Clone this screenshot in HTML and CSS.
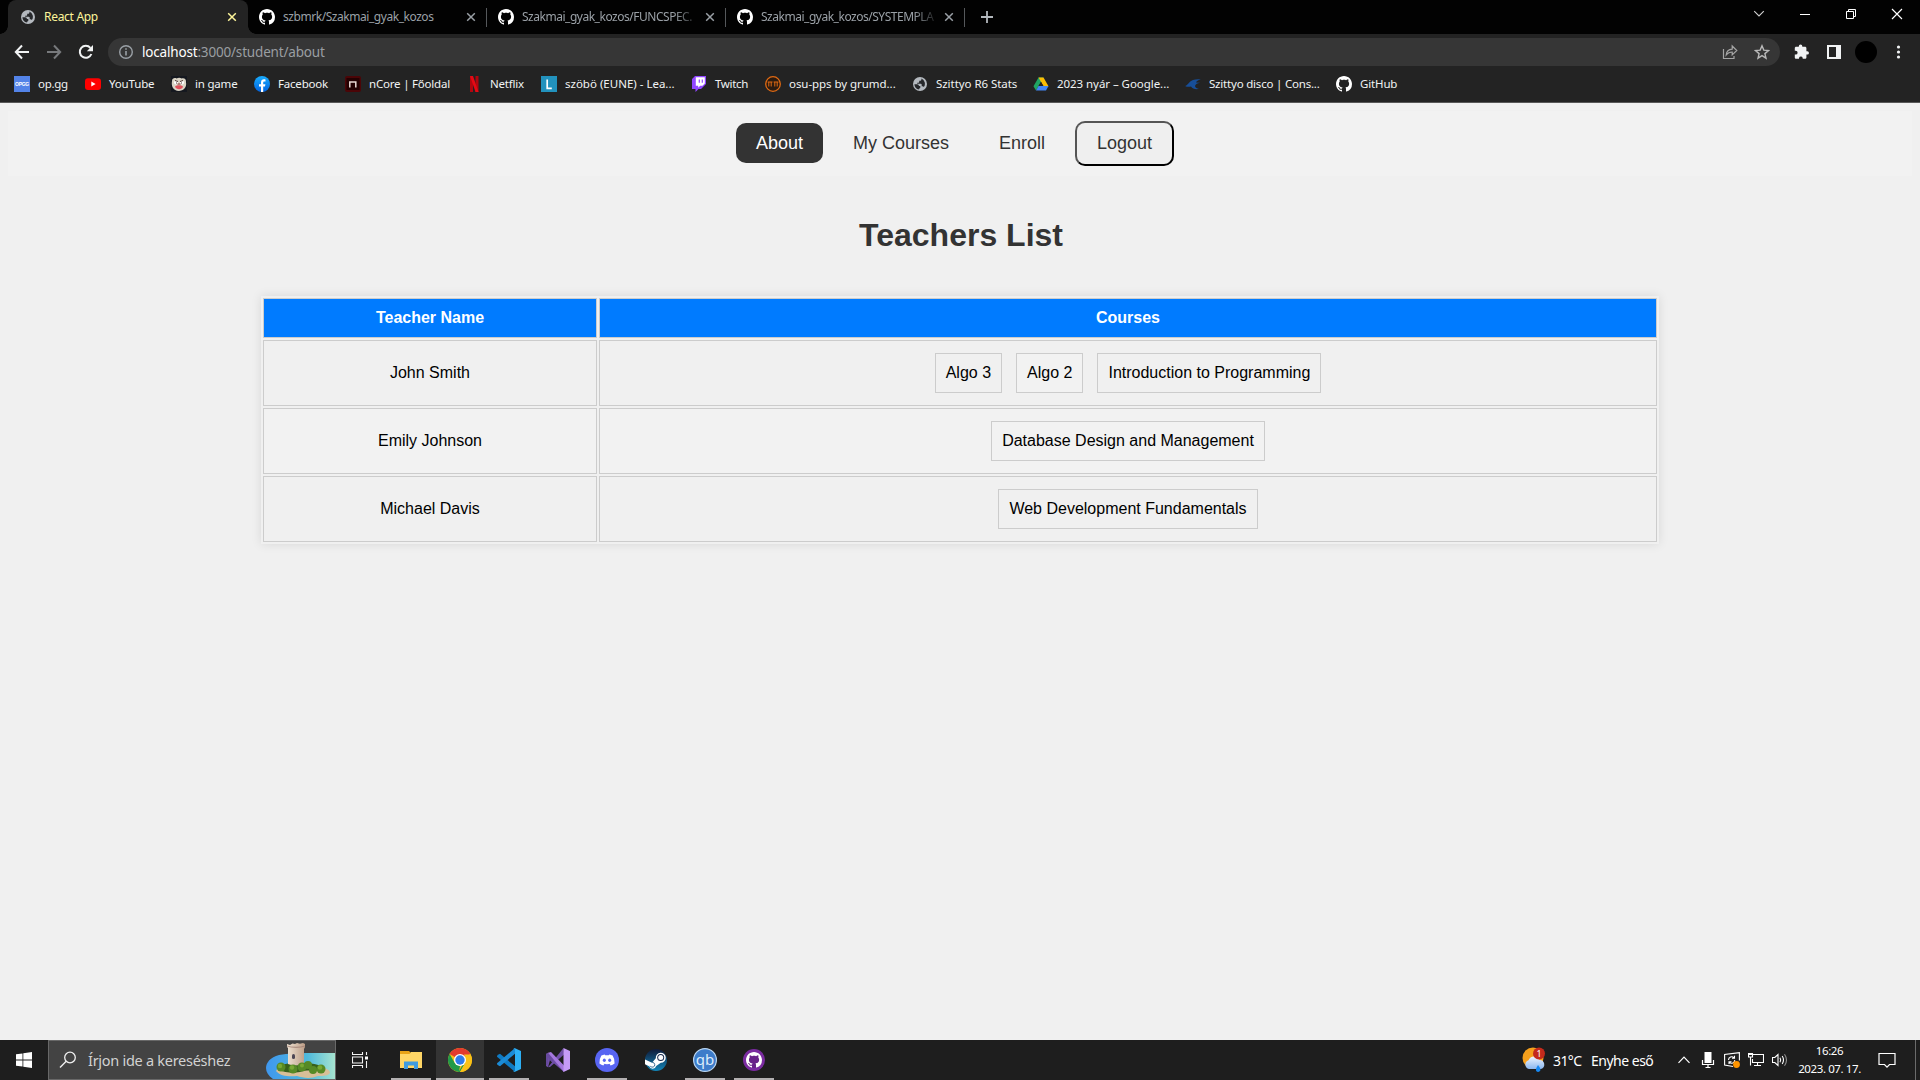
FILE: index.html
```html
<!DOCTYPE html>
<html lang="hu">
<head>
<meta charset="utf-8">
<title>React App</title>
<link rel="stylesheet" href="styles.css">
</head>
<body>
<svg class="defs" aria-hidden="true">
  <defs>
    <symbol id="github" viewBox="0 0 16 16"><path d="M8 0C3.58 0 0 3.58 0 8c0 3.54 2.29 6.53 5.47 7.59.4.07.55-.17.55-.38 0-.19-.01-.82-.01-1.49-2.01.37-2.53-.49-2.69-.94-.09-.23-.48-.94-.82-1.13-.28-.15-.68-.52-.01-.53.63-.01 1.08.58 1.23.82.72 1.21 1.87.87 2.33.66.07-.52.28-.87.51-1.07-1.78-.2-3.64-.89-3.64-3.95 0-.87.31-1.59.82-2.15-.08-.2-.36-1.02.08-2.12 0 0 .67-.21 2.2.82.64-.18 1.32-.27 2-.27s1.36.09 2 .27c1.53-1.04 2.2-.82 2.2-.82.44 1.1.16 1.92.08 2.12.51.56.82 1.27.82 2.15 0 3.07-1.87 3.75-3.65 3.95.29.25.54.73.54 1.48 0 1.07-.01 1.93-.01 2.2 0 .21.15.46.55.38A8.01 8.01 0 0 0 16 8c0-4.42-3.58-8-8-8z"/></symbol>
    <symbol id="globe" viewBox="0 0 16 16"><circle cx="8" cy="8" r="7" fill="#b4b9bf"/><path d="M2.4 8.2h2.800c1.2.1 1.700.8 1.700 1.800h1.400v1.600c0 .6-.5 1-1.200 1v.9A5.600 5.600 0 0 1 2.4 8.200zM9.400 2.600v.9c0 .8-.6 1.300-1.400 1.300h-.8v1.300c0 .4-.3.7-.7.7H5.200v1h3.600c.6 0 .9.400.9.9v1.600h.8c.6 0 1.100.3 1.300.8A5.600 5.600 0 0 0 9.400 2.600z" fill="#26282b"/></symbol>
    <symbol id="x" viewBox="0 0 10 10"><path d="M1.200 1.200l7.600 7.600M8.800 1.200L1.200 8.800" stroke="currentColor" stroke-width="1.500" fill="none"/></symbol>
    <linearGradient id="sky" x1="0" x2="1"><stop offset="0" stop-color="#3f97ee"/><stop offset=".6" stop-color="#4eb9dc"/><stop offset="1" stop-color="#a6e4d0"/></linearGradient>
    <linearGradient id="stone" x1="0" x2="1"><stop offset="0" stop-color="#eee2d2"/><stop offset="1" stop-color="#bd9e87"/></linearGradient>
    <linearGradient id="steamg" x1="0" y1="0" x2="0" y2="1"><stop offset="0" stop-color="#101a38"/><stop offset="1" stop-color="#1285b8"/></linearGradient>
    <linearGradient id="fbg" x1="0" y1="0" x2="0" y2="1"><stop offset="0" stop-color="#18acfe"/><stop offset="1" stop-color="#0163e0"/></linearGradient>
    <linearGradient id="cloudg" x1="0" y1="0" x2="0" y2="1"><stop offset="0" stop-color="#eef5ff"/><stop offset="1" stop-color="#8bb7ef"/></linearGradient>
  </defs>
</svg>

<header class="browser">
  <div class="tabstrip">
    <div class="tab active">
      <svg class="fav"><use href="#globe"/></svg><span class="tab-title">React App</span><svg class="close"><use href="#x"/></svg>
    </div>
    <div class="tab">
      <svg class="fav"><use href="#github"/></svg><span class="tab-title">szbmrk/Szakmai_gyak_kozos</span><svg class="close"><use href="#x"/></svg>
    </div>
    <div class="tab">
      <svg class="fav"><use href="#github"/></svg><span class="tab-title fade">Szakmai_gyak_kozos/FUNCSPEC.</span><svg class="close"><use href="#x"/></svg>
    </div>
    <div class="tab">
      <svg class="fav"><use href="#github"/></svg><span class="tab-title fade">Szakmai_gyak_kozos/SYSTEMPLA</span><svg class="close"><use href="#x"/></svg>
    </div>
    <svg class="newtab" viewBox="0 0 12 12"><path d="M6 0v12M0 6h12" stroke="#b3b8bd" stroke-width="1.800"/></svg>
    <div class="winctl">
      <svg viewBox="0 0 12 12"><path d="M1.200 3.200L6 8l4.800-4.800" fill="none" stroke="#d0d0d0" stroke-width="1.100"/></svg>
      <svg viewBox="0 0 12 12"><path d="M1 6.500h10" stroke="#fff"/></svg>
      <svg viewBox="0 0 12 12"><path d="M1.500 3.500h7v7h-7zM3.500 3.500v-2h7v7h-2" fill="none" stroke="#fff"/></svg>
      <svg viewBox="0 0 12 12"><path d="M1 1l10 10M11 1L1 11" stroke="#fff" stroke-width="1.150"/></svg>
    </div>
  </div>

  <div class="toolbar">
    <div class="navbtns">
      <svg viewBox="0 0 16 16"><path d="M15 8H2M8 1.500L1.800 8 8 14.500" fill="none" stroke="#f1f3f4" stroke-width="2"/></svg>
      <svg viewBox="0 0 16 16"><path d="M1 8h13M8 1.500L14.200 8 8 14.500" fill="none" stroke="#77797c" stroke-width="2"/></svg>
      <svg viewBox="0 0 16 16"><path d="M13.400 10a6 6 0 1 1-1-6.100" fill="none" stroke="#f1f3f4" stroke-width="2"/><path d="M15 1v6.200H8.800z" fill="#f1f3f4"/></svg>
    </div>
    <div class="omnibox">
      <svg class="info" viewBox="0 0 16 16"><circle cx="8" cy="8" r="6.300" fill="none" stroke="#9aa0a6" stroke-width="1.400"/><path d="M8 7v4.500M8 4.200v1.600" stroke="#9aa0a6" stroke-width="1.600"/></svg>
      <span class="url"><b>localhost</b>:3000/student/about</span>
      <svg class="share" viewBox="0 0 16 16"><path d="M1.500 5v9.500h10.500V12" fill="none" stroke="#a5a5a5" stroke-width="1.200"/><path d="M4.200 11c.3-3.800 2.600-5.800 6-5.900V2l4.600 4.500-4.600 4.400V8c-2.600 0-4.500.9-6 3z" fill="none" stroke="#a5a5a5" stroke-width="1.200"/></svg>
      <svg class="star" viewBox="0 0 16 16"><path d="M8 1.800l1.800 4.300 4.700.4-3.600 3.100 1.100 4.600L8 11.700l-4 2.500 1.100-4.600L1.500 6.500l4.700-.4z" fill="none" stroke="#b9b9b9" stroke-width="1.400"/></svg>
    </div>
    <div class="tools">
      <svg viewBox="0 0 16 16"><path d="M13.300 7.300h-.9V4.200c0-.8-.6-1.400-1.400-1.400H8.300v-.5a1.700 1.700 0 0 0-3.500 0v.5H2.200C1.400 2.800.8 3.400.8 4.200v2.600h.9a1.900 1.900 0 0 1 0 3.800H.8v2.800c0 .8.600 1.400 1.400 1.400H5v-.9a1.900 1.900 0 0 1 3.700 0v.9H11c.8 0 1.400-.6 1.400-1.400v-2.800h.9a1.650 1.650 0 0 0 0-3.300z" fill="#f1f3f4"/></svg>
      <svg viewBox="0 0 16 16"><path fill-rule="evenodd" d="M1 1h14v14H1zM3 3v10h7V3z" fill="#f1f3f4"/></svg>
      <span class="avatar"></span>
      <svg viewBox="0 0 16 16"><g fill="#f1f3f4"><circle cx="8.500" cy="3" r="1.600"/><circle cx="8.500" cy="8" r="1.600"/><circle cx="8.500" cy="13" r="1.600"/></g></svg>
    </div>
  </div>

  <nav class="bookmarks">
    <a class="bm"><svg viewBox="0 0 16 16"><path d="M0 0h16v16H0z" fill="#5383e8"/><text x="8" y="10" text-anchor="middle" class="opgg">OPGG</text></svg><span>op.gg</span></a>
    <a class="bm"><svg viewBox="0 0 16 16"><rect y="2.300" width="16" height="11.600" rx="3" fill="#f00"/><path d="M6.300 5.600v5l4.300-2.500z" fill="#fff"/></svg><span>YouTube</span></a>
    <a class="bm"><svg viewBox="0 0 16 16"><path d="M0 0h16v16H0z" fill="#15181f"/><path d="M1 5C1 2 4 1.500 5.500 2.500c2-1.300 4-1 5 0C13 1.500 15.500 3 15 6.500c.8 3-1 8-7 8.500C2 14.500 0 10 1 5z" fill="#d9d3c4"/><circle cx="5" cy="6.500" r="2" fill="#fff"/><circle cx="11" cy="6.500" r="2" fill="#fff"/><path d="M4 4.500l3 1M9 5.500l3-1M5 7h1M10 7h1" stroke="#4b342e"/><path d="M4 10.500c2-1.600 6-1.600 8 0-.6 3.500-7 3.500-8 0z" fill="#e0515c"/><path d="M6.500 8h3" stroke="#82352e"/></svg><span>in game</span></a>
    <a class="bm"><svg viewBox="0 0 16 16"><circle cx="8" cy="8" r="8" fill="url(#fbg)"/><path d="M7 16v-5.500H5V8.200h2V6.500c0-2.100 1.200-3.200 3-3.200.7 0 1.300.1 1.500.2v2h-1c-1 0-1.300.5-1.300 1.200v1.500h2.200l-.4 2.300H9.200V16z" fill="#fff"/></svg><span>Facebook</span></a>
    <a class="bm"><svg viewBox="0 0 16 16"><rect width="16" height="16" rx="2" fill="#4b0507"/><path d="M1.500 2h13v12h-13z" fill="#230102"/><path d="M4.800 11.500V6h6v5.500" fill="none" stroke="#e9d8d4" stroke-width="1.500"/></svg><span>nCore | Főoldal</span></a>
    <a class="bm"><svg viewBox="0 0 16 16"><path d="M4 0h3v16l-3 .1zM9.500 0h3v16h-3z" fill="#b1060f"/><path d="M4 0h3l5.500 16H9.500z" fill="#e50914"/></svg><span>Netflix</span></a>
    <a class="bm"><svg viewBox="0 0 16 16"><path d="M0 0h16v16H0z" fill="#2292bd"/><path d="M6.200 3.500v8.800h4.600" fill="none" stroke="#fff" stroke-width="1.700"/></svg><span>szöbö (EUNE) - Lea...</span></a>
    <a class="bm"><svg viewBox="0 0 16 16"><path d="M4 0L1 3v10h3.500v3l3-3H10l5-5V0z" fill="#9146ff"/><path d="M4.800 1.200h9v6.300l-2.300 2.300H9.200l-2 2v-2H4.800z" fill="#fff"/><path d="M8.300 3.500v3.200M11.300 3.500v3.200" stroke="#9146ff" stroke-width="1.200"/></svg><span>Twitch</span></a>
    <a class="bm"><svg viewBox="0 0 16 16"><circle cx="8" cy="8" r="7.300" fill="#2b1b10" stroke="#e06a13" stroke-width="1.300"/><path d="M2.600 6h4.900M3.800 6v4.500M6.200 6v4.500M8.600 6h4.900M9.800 6v4.500M12.200 6v4.500" stroke="#e06a13" stroke-width="1"/></svg><span>osu-pps by grumd...</span></a>
    <a class="bm"><svg><use href="#globe"/></svg><span>Szittyo R6 Stats</span></a>
    <a class="bm"><svg viewBox="0 0 16 16"><path d="M5.500 1.500h5L5.800 9.600 3 14.500.5 10.200z" fill="#1fa463"/><path d="M5.500 1.500h5l5 8.700h-5z" fill="#fbbc04"/><path d="M5.500 10h10L13 14.500H3z" fill="#4285f4"/><path d="M8 5.800l2.400 4.200H5.600z" fill="#232323"/></svg><span>2023 nyár – Google...</span></a>
    <a class="bm"><svg viewBox="0 0 16 16"><path d="M0 10c3-.5 3.500-4.500 8-6 2.500-1 5-1 7.800-.7C13 4.200 11.500 5 11 6.500l4 .3c-2.500.5-4.500 1.300-5 3.200.4 1.800 2 2.500 4 3-4 .5-6.500-.3-8-2.500-2 .5-4 .5-6-.5z" fill="#174e98"/></svg><span>Szittyo disco | Cons...</span></a>
    <a class="bm"><svg class="white"><use href="#github"/></svg><span>GitHub</span></a>
  </nav>
</header>

<main class="page">
  <nav class="menu">
    <a class="menu-item current">About</a>
    <a class="menu-item">My Courses</a>
    <a class="menu-item">Enroll</a>
    <button class="menu-item logout">Logout</button>
  </nav>
  <h1>Teachers List</h1>
  <table class="teachers">
    <thead><tr><th class="name-col">Teacher Name</th><th>Courses</th></tr></thead>
    <tbody>
      <tr><td>John Smith</td><td><div class="chips"><span>Algo 3</span><span>Algo 2</span><span>Introduction to Programming</span></div></td></tr>
      <tr><td>Emily Johnson</td><td><div class="chips"><span>Database Design and Management</span></div></td></tr>
      <tr><td>Michael Davis</td><td><div class="chips"><span>Web Development Fundamentals</span></div></td></tr>
    </tbody>
  </table>
</main>

<footer class="taskbar">
  <div class="start"><svg viewBox="0 0 16 16"><path d="M0 2.300L6.500 1.400v6.200H0zM7.300 1.300L16 0v7.600H7.300zM0 8.400h6.500v6.200L0 13.700zM7.300 8.400H16V16l-8.700-1.300z" fill="#fff"/></svg></div>
  <div class="search">
    <svg class="lens" viewBox="0 0 18 18"><circle cx="11" cy="6.500" r="5.300" fill="none" stroke="#f0f0f0" stroke-width="1.300"/><path d="M7.200 10.300L1 16.500" stroke="#f0f0f0" stroke-width="1.400"/></svg>
    <span class="hint">Írjon ide a kereséshez</span>
    <svg class="island" viewBox="0 0 70 38"><path d="M70 12v26H8C-3 31-1 18 14 14c9-2 20-1 26-2z" fill="url(#sky)"/><path d="M11 30c2-4 12-6 26-6 14 1 26 2 28 7 0 4-7 4-12 4-7 3-15 2-21 0-8 1-17 0-21-5z" fill="#d8bf98"/><path d="M12 27c5-5 17-6 26-5 12 0 19 2 22 7-9 2-17-1-25 2-9 1-18 1-23-4z" fill="#37601c"/><g fill="#568a25"><circle cx="16" cy="26" r="4.500"/><circle cx="48" cy="29" r="4"/><circle cx="56" cy="28" r="4.500"/></g><path d="M23 7l-1-1V3l3 1 2.500-1.500L30 3l2-1 3 .8L38 2l2 1v3l-1 2v14c-3 3-12 3-16 1z" fill="url(#stone)"/><path d="M22 5c5 1.800 13 1.800 18 0" fill="none" stroke="#9b7b71" stroke-width="1.300" opacity=".7"/><rect x="27" y="13" width="3" height="5" rx="1.500" fill="#4d4654"/><g fill="#568a25"><circle cx="28" cy="28" r="4.500"/><circle cx="37" cy="26" r="4.500"/><circle cx="43" cy="24" r="4"/></g><g fill="#78a934"><circle cx="15" cy="25" r="2.200"/><circle cx="27" cy="26.500" r="2.200"/><circle cx="37" cy="24.500" r="2"/><circle cx="55" cy="26.500" r="2.300"/></g></svg>
  </div>
  <div class="taskview"><svg viewBox="0 0 16 16"><path d="M.5 0v2.500h10V0M.5 16v-2.500h10V16M.5 5h10v6H.5zM14.500 0v3M14.500 9v7" fill="none" stroke="#f2f2f2" stroke-width="1.100"/><path d="M13 4.500h3v3h-3z" fill="#fff"/></svg></div>
  <div class="apps">
    <div class="app open"><svg viewBox="0 0 24 24"><path d="M1 4V3h9l1.500 1.500V8H1z" fill="#e8a317"/><path d="M1 6h9.500L12 4h11v16H1z" fill="#ffd666"/><path d="M5 21v-7.500h14V21h-4v-3.500H9V21z" fill="#3f9be0"/></svg></div>
    <div class="app open focus"><svg viewBox="0 0 24 24"><circle cx="12" cy="12" r="12" fill="#fbc116"/><path d="M12 12L1.600 6A12 12 0 0 1 22.400 6z" fill="#e33b2e"/><path d="M1.600 6l5.200 9L12 18l-1 6A12 12 0 0 1 1.600 6z" fill="#229a48"/><path d="M12 12l5.200 3L12 24h-1.500l4-7z" fill="#229a48"/><path d="M12 24l5.200-9A6 6 0 0 0 17 8.500L16 6.600h6.700A12 12 0 0 1 12 24z" fill="#fbc116"/><circle cx="12" cy="12" r="6" fill="#fff"/><circle cx="12" cy="12" r="4.700" fill="#307ce9"/></svg></div>
    <div class="app open"><svg viewBox="0 0 24 24"><path d="M1.500 6.500L3 5.800l15 12.400V24L.3 9q-.7-.8 0-1.500z" fill="#0f7bc4"/><path d="M1.500 17.500l1.500.7L18 5.800V0L.3 15q-.7.8 0 1.500z" fill="#1b8bd6"/><path d="M17.500 0L24 3v18l-6.500 3c-.7.200-1-.2-1-.7 1 .3 1.500-.1 1.500-.8V1.500c0-.7-.7-1.200-1.500-.8 0-.5.400-.8 1-.7z" fill="#2db0f5"/></svg></div>
    <div class="app"><svg viewBox="0 0 24 24"><path d="M0 6l2-1.300 16 13V24L4 12l-2 2.500v-5L4 12l-2 7.300L0 18z" fill="#704fa8"/><path d="M0 6l2-1.200L9 11l-3.500 3L2 9.500v6L0 18z" fill="#684a9e"/><path d="M2 19.300L17.500 0 18 6.500 4 19z" fill="#704fa8"/><path d="M2 4.700L5 4l13 13.500V24z" fill="#a477dd"/><path d="M17.500 0L24 3v18l-6.500 3z" fill="#c59bf7"/></svg></div>
    <div class="app open"><svg viewBox="0 0 24 24"><circle cx="12" cy="12" r="12" fill="#5865f2"/><path d="M9.700 6.400l.5.900q1.800-.3 3.600 0l.5-.9q1.800.300 3.300 1.100 2.400 3.700 2 8-2 1.500-4 2l-.9-1.400 1.300-.7q-4 1.500-8 0l1.300.7-.9 1.400q-2-.5-4-2-.4-4.300 2-8 1.500-.8 3.300-1.100z" fill="#fff"/><ellipse cx="9.300" cy="12.300" rx="1.500" ry="1.700" fill="#5865f2"/><ellipse cx="14.700" cy="12.300" rx="1.500" ry="1.700" fill="#5865f2"/></svg></div>
    <div class="app"><svg viewBox="0 0 24 24"><circle cx="12" cy="12" r="11" fill="url(#steamg)"/><path d="M1 11.500l7 3.200 3.800-4.400a5 5 0 1 1 5 4.500L12.200 18a3.700 3.700 0 0 1-7 .3L1 16.300z" fill="#fff"/><circle cx="16.700" cy="9.500" r="3.500" fill="#17294c"/><circle cx="16.700" cy="9.500" r="2.500" fill="#fff"/><path d="M6.200 17.800a2.400 2.400 0 1 0 2-3.400" fill="none" stroke="#144f7d" stroke-width=".8"/></svg></div>
    <div class="app open"><svg viewBox="0 0 24 24"><circle cx="12" cy="12" r="11.400" fill="#3d7cca" stroke="#b9d6f3" stroke-width="1.200"/><text x="12" y="16.500" text-anchor="middle" class="qb">qb</text></svg></div>
    <div class="app open"><svg viewBox="0 0 24 24"><circle cx="12" cy="12" r="11" fill="#7a2ba0"/><circle cx="12" cy="12" r="8" fill="#682389"/><use href="#github" x="4" y="4" width="16" height="16" fill="#fff"/></svg></div>
  </div>
  <div class="weather">
    <svg viewBox="0 0 24 26"><circle cx="11" cy="11" r="10.500" fill="#f6a01c"/><path d="M7 22a4.500 4.500 0 0 1-.5-8.700A6 6 0 0 1 17.500 13 4.600 4.600 0 0 1 19 22z" fill="url(#cloudg)"/><path d="M16 18q3.500 4 2 6-2 1.800-3.800 0-1-2 1.800-6z" fill="#1687f0"/><circle cx="17" cy="6.500" r="6" fill="#c42b1c"/><text x="17" y="10" text-anchor="middle" class="badge">1</text></svg>
    <span class="temp">31°C</span><span class="cond">Enyhe eső</span>
  </div>
  <div class="tray">
    <svg viewBox="0 0 16 16"><path d="M2.500 10.800L8 5.200l5.500 5.600" fill="none" stroke="#fff" stroke-width="1.200"/></svg>
    <svg viewBox="0 0 16 16"><path d="M4.500 0h7v11h-7z" fill="#fff"/><path d="M2.500 8v4.500h11V8M8 12.500v3M5.500 15.500h5" fill="none" stroke="#fff" stroke-width="1.200"/></svg>
    <svg viewBox="0 0 16 16"><path d="M9 14.500L.6 13V2.500L15.400.6v8" fill="none" stroke="#fff" stroke-width="1.100"/><path d="M4.500 8a3.200 3.200 0 0 1 5.500-2.200M10.500 3.800v2.500H8M10.800 8a3.200 3.200 0 0 1-5.500 2.200M5 12V9.800h2.500" fill="none" stroke="#fff" stroke-width="1.100"/><circle cx="12.500" cy="12.500" r="3.400" fill="#ff9500"/></svg>
    <svg viewBox="0 0 16 16"><path d="M5 2.500h10.500v8H4.500V7M9.500 10.500v3M6 13.500h7M.5 1.500h4V5h-4zM2.500 5v8.500M0 2.500h5" fill="none" stroke="#fff" stroke-width="1.100"/></svg>
    <svg viewBox="0 0 16 16"><path d="M.5 5.500h2.300L6 2.500v11l-3.200-3H.5z" fill="none" stroke="#fff" stroke-width="1.100"/><path d="M8 5.700q1.400 2.300 0 4.600M10.200 4q2.600 4 0 8" fill="none" stroke="#fff" stroke-width="1.100"/><path d="M12.500 2.200q4 5.800 0 11.600" fill="none" stroke="#909090" stroke-width="1.100"/></svg>
  </div>
  <div class="clock"><span class="time">16:26</span><span class="date">2023. 07. 17.</span></div>
  <svg class="notif" viewBox="0 0 18 18"><path d="M1 2.500h16v11h-5.500L9 16.200 6.500 13.500H1z" fill="none" stroke="#fff" stroke-width="1.200"/></svg>
  <div class="peek"></div>
</footer>
</body>
</html>
```
FILE: styles.css
```css
* { box-sizing: border-box; }
html, body { height: 100%; }
body {
  margin: 0;
  display: flex;
  flex-direction: column;
  overflow: hidden;
  background: #f0f0f0;
  font-family: "Liberation Sans", Arial, sans-serif;
}
svg { display: block; flex: none; }
.defs { position: absolute; width: 0; height: 0; }

/* Browser chrome */
.browser {
  flex: none;
  height: 103px;
  background: #232323;
  border-bottom: 1px solid #585858;
  font-family: "Noto Sans", "Open Sans", sans-serif;
}
.tabstrip { height: 34px; display: flex; background: #020202; padding-left: 8px; }
.tab {
  position: relative;
  width: 239px;
  height: 34px;
  display: flex;
  align-items: center;
  padding: 0 10px 0 12px;
  color: #9aa0a6;
  font-size: 12px;
}
.tab::after { content: ""; position: absolute; right: -1px; top: 8px; width: 1px; height: 19px; background: #55585b; }
.tab.active { width: 240px; margin-right: -1px; padding-right: 11px; background: #232323; border-radius: 8px 8px 0 0; color: #fdf59a; }
.tab.active::before, .tab.active::after {
  content: ""; position: absolute; top: auto; bottom: 0; width: 8px; height: 8px;
}
.tab.active::before { left: -8px; background: radial-gradient(circle at 0 0, transparent 7.5px, #232323 8px); }
.tab.active::after { right: -8px; background: radial-gradient(circle at 100% 0, transparent 7.5px, #232323 8px); }
.fav { width: 16px; height: 16px; fill: #fff; }
.tab-title { flex: 1; margin: 0 8px; white-space: nowrap; line-height: 18px; letter-spacing: -0.45px; }
.tab.active .tab-title { letter-spacing: -0.3px; }
.tab-title.fade { letter-spacing: -0.48px; margin-right: 4px; -webkit-mask-image: linear-gradient(90deg, #000 85%, transparent 100%); mask-image: linear-gradient(90deg, #000 85%, transparent 100%); }
.close { width: 10px; height: 10px; }
.newtab { width: 12px; height: 12px; margin: 11px 0 0 17px; }
.winctl { margin-left: auto; display: flex; gap: 34px; padding: 8px 17px 0 0; }
.winctl svg { width: 12px; height: 12px; }

.toolbar { height: 36px; display: flex; align-items: center; }
.navbtns { display: flex; gap: 16px; padding-left: 14px; width: 108px; }
.navbtns svg { width: 16px; height: 16px; }
.omnibox {
  width: 1672px; height: 28px;
  display: flex; align-items: center;
  border-radius: 14px;
  background: #363636;
  padding: 0 10px;
}
.info { width: 16px; height: 16px; }
.url { flex: 1; margin-left: 8px; font-size: 13.5px; letter-spacing: -0.18px; line-height: 20px; color: #9a9ea2; }
.url b { font-weight: 400; color: #fff; }
.share { width: 16px; height: 16px; margin-right: 16px; }
.star { width: 16px; height: 16px; }
.tools { display: flex; align-items: center; padding-left: 14px; }
.tools svg { width: 16px; height: 16px; }
.tools svg + svg { margin-left: 16px; }
.avatar { width: 22px; height: 22px; border-radius: 50%; background: #000; margin: 0 13px; }

.bookmarks { display: flex; gap: 16px; padding: 6px 0 0 14px; color: #f1f3f4; font-size: 11.5px; }
.bm { display: flex; align-items: center; gap: 8px; white-space: nowrap; line-height: 16px; letter-spacing: -0.2px; }
.bm svg { width: 16px; height: 16px; }
.bm .white { fill: #fff; }
.bm:nth-child(1) { width: 55px; letter-spacing: -0.3px; }
.bm:nth-child(2) { width: 70px; letter-spacing: -0.15px; }
.bm:nth-child(3) { width: 67px; }
.bm:nth-child(4) { width: 75px; }
.bm:nth-child(5) { width: 105px; }
.bm:nth-child(6) { width: 59px; }
.bm:nth-child(7) { width: 134px; letter-spacing: 0; }
.bm:nth-child(8) { width: 58px; letter-spacing: -0.3px; }
.bm:nth-child(9) { width: 131px; letter-spacing: -0.05px; }
.bm:nth-child(10) { width: 105px; letter-spacing: -0.05px; }
.bm:nth-child(11) { width: 136px; letter-spacing: -0.05px; }
.bm:nth-child(12) { width: 135px; letter-spacing: -0.2px; }
.bm:nth-child(13) { width: 62px; letter-spacing: -0.15px; }
.opgg { font: 700 5px "Liberation Sans", sans-serif; fill: #fff; letter-spacing: -.3px; }

/* Page */
.page { flex: 1; padding: 8px; }
.menu {
  height: 65px;
  display: flex; align-items: center; justify-content: center; gap: 10px;
  padding: 0 10px 1px 0;
  background: #f2f2f2;
}
.menu-item { padding: 10px 20px; font: 18px/20px "Liberation Sans", Arial, sans-serif; color: #333; border-radius: 10px; }
.current { background: #333; color: #fff; }
.logout { height: 45px; padding: 10px 20px; background: #efefef; border: 2px solid; border-color: #555 #000 #000 #555; }
h1 { margin: 40px 0 0 2px; font-size: 32px; line-height: 38px; text-align: center; color: #333; }
.teachers {
  width: 1398px;
  margin: 42px auto 0;
  border-spacing: 2px;
  table-layout: fixed;
  font-size: 16px;
  text-align: center;
  box-shadow: 0 0 10px rgba(0, 0, 0, .1);
  background: #f0f0f0;
}
.teachers th, .teachers td { border: 1px solid #ccc; padding: 0; }
.teachers th { height: 40px; background: #007bff; color: #fff; }
.teachers td { height: 66px; }
.teachers tbody tr:nth-child(even) { background: #f2f2f2; }
.name-col { width: 334px; }
.chips { display: flex; justify-content: center; gap: 14px; }
.chips span { border: 1px solid #ccc; padding: 10px; line-height: 18px; }
.chips span:nth-child(even) { background: #f2f2f2; }

/* Taskbar */
.taskbar {
  flex: none;
  height: 40px;
  display: flex;
  background: #1e1e1e;
  color: #fff;
  font-family: "Noto Sans", "Open Sans", sans-serif;
}
.start { width: 48px; padding: 12px 16px; }
.start svg { width: 16px; height: 16px; }
.search { width: 288px; display: flex; align-items: center; background: #434343; border: 1px solid #686868; }
.lens { width: 18px; height: 18px; margin-left: 10px; }
.hint { flex: 1; margin-left: 11px; font-size: 14.5px; letter-spacing: -0.28px; color: #d2d2d2; white-space: nowrap; }
.island { width: 70px; height: 38px; }
.taskview { width: 55px; padding: 12px 16px; }
.taskview svg { width: 16px; height: 16px; }
.apps { display: flex; gap: 9px; }
.app { width: 40px; height: 40px; padding: 8px; }
.app svg { width: 24px; height: 24px; }
.open { border-bottom: 2px solid #b3b0b1; }
.focus { width: 48px; padding: 8px 12px; margin: 0 -4px; background: #343434; }
.qb { font: 15px "Noto Sans", sans-serif; fill: #dcecfb; }
.badge { font: 9px "Noto Sans", sans-serif; fill: #fff; }
.weather { margin-left: 748px; width: 152px; display: flex; align-items: center; white-space: nowrap; font-size: 14px; }
.weather svg { width: 24px; height: 26px; }
.temp { margin-left: 7px; width: 38px; letter-spacing: -0.6px; }
.cond { letter-spacing: -0.5px; }
.tray { display: flex; align-items: center; gap: 8px; padding-left: 2px; }
.tray svg { width: 16px; height: 16px; }
.clock { width: 83px; display: flex; flex-direction: column; justify-content: center; align-items: center; font-size: 11.5px; line-height: 18px; letter-spacing: -0.4px; white-space: nowrap; }
.notif { width: 18px; height: 18px; margin: 11px 0 0 7px; }
.peek { width: 5px; margin-left: auto; border-left: 1px solid #6b6b6b; }
```
